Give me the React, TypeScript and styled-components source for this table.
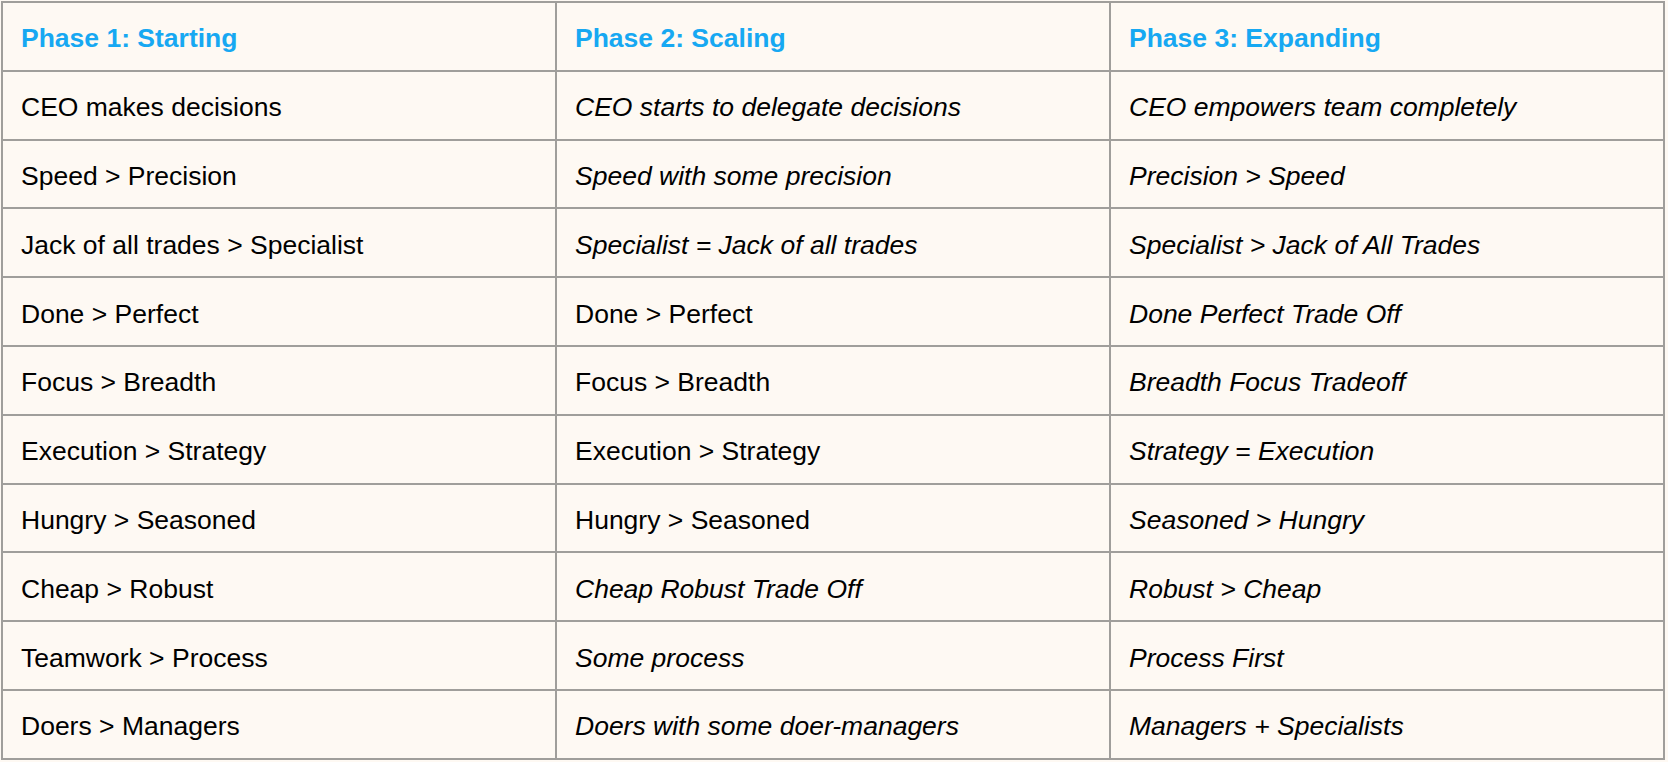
import * as React from 'react';
import styled, { createGlobalStyle } from 'styled-components';

const GlobalStyle = createGlobalStyle`
  html, body {
    margin: 0;
    padding: 0;
    background: #fef9f3;
  }
`;

const Page = styled.div`
  padding: 1px;
  font-family: 'Liberation Sans', Arial, sans-serif;
`;

const Table = styled.table`
  width: 1664px;
  table-layout: fixed;
  border-collapse: collapse;
  background: #fef9f3;
  border: 2px solid #a09e9b;
`;

const Row = styled.tr`
  height: 68.8px;
`;

const Cell = styled.td<{ $italic?: boolean }>`
  border: 2px solid #a09e9b;
  padding: 4px 16px 0 18px;
  font-size: 26.5px;
  line-height: 32px;
  color: #000;
  font-style: ${(p) => (p.$italic ? 'italic' : 'normal')};
  vertical-align: middle;
  white-space: nowrap;
`;

const HeadCell = styled.th`
  border: 2px solid #a09e9b;
  padding: 4px 16px 0 18px;
  font-size: 26.5px;
  line-height: 32px;
  font-weight: bold;
  color: #17a8f2;
  text-align: left;
  vertical-align: middle;
`;

type Entry = { text: string; italic?: boolean };

const headers = ['Phase 1: Starting', 'Phase 2: Scaling', 'Phase 3: Expanding'];

const rows: Entry[][] = [
  [
    { text: 'CEO makes decisions' },
    { text: 'CEO starts to delegate decisions', italic: true },
    { text: 'CEO empowers team completely', italic: true }
  ],
  [
    { text: 'Speed > Precision' },
    { text: 'Speed with some precision', italic: true },
    { text: 'Precision > Speed', italic: true }
  ],
  [
    { text: 'Jack of all trades > Specialist' },
    { text: 'Specialist = Jack of all trades', italic: true },
    { text: 'Specialist > Jack of All Trades', italic: true }
  ],
  [
    { text: 'Done > Perfect' },
    { text: 'Done > Perfect' },
    { text: 'Done Perfect Trade Off', italic: true }
  ],
  [
    { text: 'Focus > Breadth' },
    { text: 'Focus > Breadth' },
    { text: 'Breadth Focus Tradeoff', italic: true }
  ],
  [
    { text: 'Execution > Strategy' },
    { text: 'Execution > Strategy' },
    { text: 'Strategy = Execution', italic: true }
  ],
  [
    { text: 'Hungry > Seasoned' },
    { text: 'Hungry > Seasoned' },
    { text: 'Seasoned > Hungry', italic: true }
  ],
  [
    { text: 'Cheap > Robust' },
    { text: 'Cheap Robust Trade Off', italic: true },
    { text: 'Robust > Cheap', italic: true }
  ],
  [
    { text: 'Teamwork > Process' },
    { text: 'Some process', italic: true },
    { text: 'Process First', italic: true }
  ],
  [
    { text: 'Doers > Managers' },
    { text: 'Doers with some doer-managers', italic: true },
    { text: 'Managers + Specialists', italic: true }
  ]
];

const App: React.FC = () => (
  <Page>
    <GlobalStyle />
    <Table>
      <thead>
        <Row>
          {headers.map((h) => (
            <HeadCell key={h}>{h}</HeadCell>
          ))}
        </Row>
      </thead>
      <tbody>
        {rows.map((row, i) => (
          <Row key={i}>
            {row.map((cell, j) => (
              <Cell key={j} $italic={cell.italic}>
                {cell.text}
              </Cell>
            ))}
          </Row>
        ))}
      </tbody>
    </Table>
  </Page>
);

export default App;
